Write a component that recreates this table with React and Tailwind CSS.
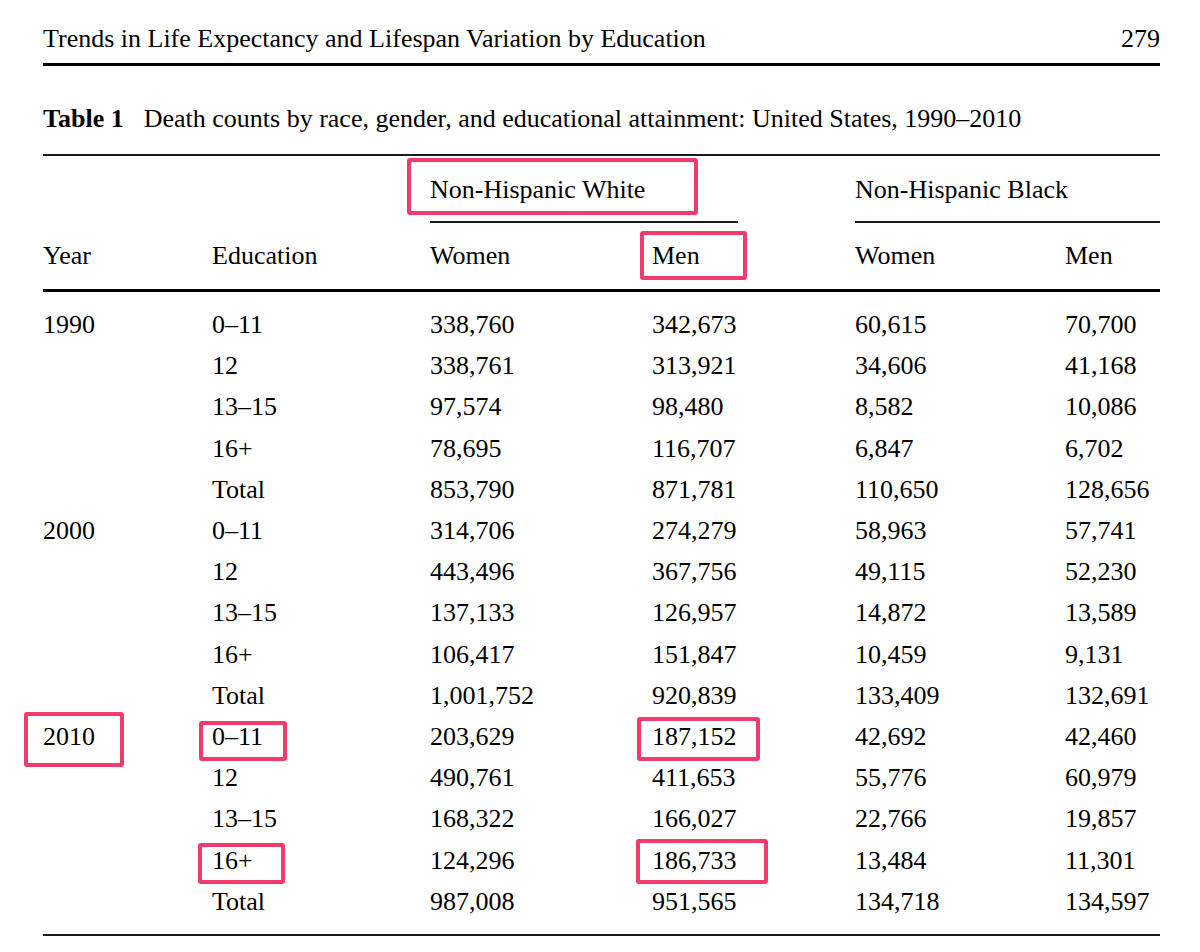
const cols = 'grid grid-cols-[169px_218px_222px_203px_210px_95px]';

const groups = [
  {
    year: '1990',
    rows: [
      ['0–11', '338,760', '342,673', '60,615', '70,700'],
      ['12', '338,761', '313,921', '34,606', '41,168'],
      ['13–15', '97,574', '98,480', '8,582', '10,086'],
      ['16+', '78,695', '116,707', '6,847', '6,702'],
      ['Total', '853,790', '871,781', '110,650', '128,656'],
    ],
  },
  {
    year: '2000',
    rows: [
      ['0–11', '314,706', '274,279', '58,963', '57,741'],
      ['12', '443,496', '367,756', '49,115', '52,230'],
      ['13–15', '137,133', '126,957', '14,872', '13,589'],
      ['16+', '106,417', '151,847', '10,459', '9,131'],
      ['Total', '1,001,752', '920,839', '133,409', '132,691'],
    ],
  },
  {
    year: '2010',
    rows: [
      ['0–11', '203,629', '187,152', '42,692', '42,460'],
      ['12', '490,761', '411,653', '55,776', '60,979'],
      ['13–15', '168,322', '166,027', '22,766', '19,857'],
      ['16+', '124,296', '186,733', '13,484', '11,301'],
      ['Total', '987,008', '951,565', '134,718', '134,597'],
    ],
  },
];

// highlight boxes drawn over the 2010 rows, offsets relative to the cell
const marks = {
  '2010-0-year': 'left-[-19px] top-[-4px] w-[100px] h-[55px]',
  '2010-0-edu': 'left-[-13px] top-[5px] w-[88px] h-[40px]',
  '2010-0-men': 'left-[-15px] top-[1px] w-[123px] h-[44px]',
  '2010-3-edu': 'left-[-14px] top-[3px] w-[87px] h-[41px]',
  '2010-3-men': 'left-[-16px] top-[-1px] w-[132px] h-[45px]',
};

function Mark({ pos }) {
  if (!pos) return null;
  return <span className={`absolute ${pos} border-[4.5px] border-[#f23a6c] rounded-[3px] pointer-events-none`} />;
}

export default function App() {
  return (
    <div className="min-h-[952px] bg-white text-black font-['Liberation_Serif',serif] text-[26px]">
      <div className="w-[1160px] pl-[43px] pt-[24px]">
        <div className="flex justify-between leading-[30px]">
          <span>Trends in Life Expectancy and Lifespan Variation by Education</span>
          <span>279</span>
        </div>
        <div className="mt-[9px] h-[3px] bg-black" />

        <div className="mt-[38px] leading-[30px]">
          <span className="font-bold">Table 1</span>
          <span className="ml-[20px]">Death counts by race, gender, and educational attainment: United States, 1990–2010</span>
        </div>
        <div className="mt-[20px] h-[2px] bg-[#1a1a1a]" />

        <div className={`${cols} mt-[19px] leading-[30px]`}>
          <div className="col-start-3 col-span-2 relative">
            <span>Non-Hispanic White</span>
            <Mark pos="left-[-23px] top-[-17px] w-[291px] h-[57px]" />
          </div>
          <div className="col-span-2">Non-Hispanic Black</div>
        </div>
        <div className={`${cols} mt-[16px]`}>
          <div className="col-start-3 col-span-2 w-[308px] h-[2px] bg-[#1a1a1a]" />
          <div className="col-span-2 h-[2px] bg-[#1a1a1a]" />
        </div>

        <div className={`${cols} mt-[18px] leading-[30px]`}>
          <div>Year</div>
          <div>Education</div>
          <div>Women</div>
          <div className="relative">
            Men
            <Mark pos="left-[-12px] top-[-10px] w-[107px] h-[49px]" />
          </div>
          <div>Women</div>
          <div>Men</div>
        </div>
        <div className="mt-[18px] h-[3px] bg-black" />

        <div className="mt-[12px]">
          {groups.map((g) =>
            g.rows.map((r, i) => (
              <div key={g.year + i} className={`${cols} leading-[41.2px]`}>
                <div className="relative">
                  {i === 0 ? g.year : ''}
                  <Mark pos={marks[`${g.year}-${i}-year`]} />
                </div>
                <div className="relative">
                  {r[0]}
                  <Mark pos={marks[`${g.year}-${i}-edu`]} />
                </div>
                <div>{r[1]}</div>
                <div className="relative">
                  {r[2]}
                  <Mark pos={marks[`${g.year}-${i}-men`]} />
                </div>
                <div>{r[3]}</div>
                <div>{r[4]}</div>
              </div>
            ))
          )}
        </div>
        <div className="mt-[12px] h-[2px] bg-[#1a1a1a]" />
      </div>
    </div>
  );
}
